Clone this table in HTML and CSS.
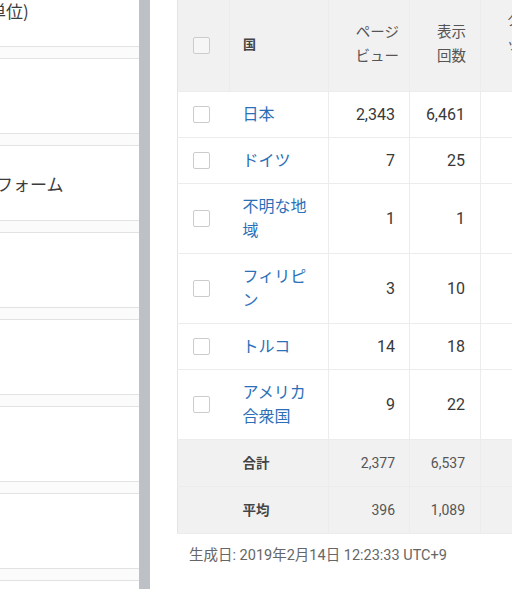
FILE: index.html
```html
<!DOCTYPE html>
<html lang="ja">
<head>
<meta charset="utf-8">
<link rel="stylesheet" href="styles.css">
</head>
<body>
<div class="page">
  <div class="left">
    <div class="cards">
      <div class="card"><span class="card-text t1">単位)</span></div>
      <div class="card"></div>
      <div class="card"><span class="card-text t2">フォーム</span></div>
      <div class="card"></div>
      <div class="card"></div>
      <div class="card"></div>
      <div class="card"></div>
      <div class="card"></div>
    </div>
  </div>
  <div class="scrollbar"></div>
  <div class="right">
    <table class="report">
      <thead>
        <tr>
          <th class="c-cb"><span class="cb"></span></th>
          <th class="c-name">国</th>
          <th class="c-pv">ページ<br>ビュー</th>
          <th class="c-imp">表示<br>回数</th>
          <th class="c-clk">クリ<br>ック<br>数</th>
        </tr>
      </thead>
      <tbody>
        <tr>
          <td class="c-cb"><span class="cb"></span></td>
          <td class="c-name"><a class="link">日本</a></td>
          <td class="c-pv">2,343</td>
          <td class="c-imp">6,461</td>
          <td class="c-clk">0</td>
        </tr>
        <tr>
          <td class="c-cb"><span class="cb"></span></td>
          <td class="c-name"><a class="link">ドイツ</a></td>
          <td class="c-pv">7</td>
          <td class="c-imp">25</td>
          <td class="c-clk">0</td>
        </tr>
        <tr>
          <td class="c-cb"><span class="cb"></span></td>
          <td class="c-name"><a class="link">不明な地域</a></td>
          <td class="c-pv">1</td>
          <td class="c-imp">1</td>
          <td class="c-clk">0</td>
        </tr>
        <tr>
          <td class="c-cb"><span class="cb"></span></td>
          <td class="c-name"><a class="link">フィリピン</a></td>
          <td class="c-pv">3</td>
          <td class="c-imp">10</td>
          <td class="c-clk">0</td>
        </tr>
        <tr>
          <td class="c-cb"><span class="cb"></span></td>
          <td class="c-name"><a class="link">トルコ</a></td>
          <td class="c-pv">14</td>
          <td class="c-imp">18</td>
          <td class="c-clk">0</td>
        </tr>
        <tr>
          <td class="c-cb"><span class="cb"></span></td>
          <td class="c-name"><a class="link">アメリカ合衆国</a></td>
          <td class="c-pv">9</td>
          <td class="c-imp">22</td>
          <td class="c-clk">0</td>
        </tr>
      </tbody>
      <tfoot>
        <tr>
          <td class="c-cb"></td>
          <td class="c-name label">合計</td>
          <td class="c-pv">2,377</td>
          <td class="c-imp">6,537</td>
          <td class="c-clk">0</td>
        </tr>
        <tr>
          <td class="c-cb"></td>
          <td class="c-name label">平均</td>
          <td class="c-pv">396</td>
          <td class="c-imp">1,089</td>
          <td class="c-clk">0</td>
        </tr>
      </tfoot>
    </table>
    <div class="generated">生成日: 2019年2月14日 12:23:33 UTC+9</div>
  </div>
</div>
</body>
</html>
```

FILE: styles.css
```css
html, body {
  margin: 0;
  padding: 0;
  background: #ffffff;
}

body {
  font-family: Roboto, "Noto Sans CJK JP", sans-serif;
  color: #333333;
}

.page {
  display: flex;
  width: 512px;
  height: 589px;
  overflow: hidden;
}

.left {
  width: 139px;
  flex: none;
  background: #fbfbfb;
  overflow: hidden;
}

.cards {
  display: flex;
  flex-direction: column;
  gap: 11px;
  margin-top: -29px;
}

.card {
  height: 74px;
  flex: none;
  background: #ffffff;
  border-top: 1px solid #e2e2e2;
  border-bottom: 1px solid #e2e2e2;
  display: flex;
  align-items: center;
  overflow: hidden;
}

.card-text {
  font-family: "Noto Sans CJK JP", sans-serif;
  font-size: 17px;
  color: #3c3c3c;
  white-space: nowrap;
}

.t1 { margin-left: -11px; margin-top: 3px; }
.t2 { margin-left: -4px; }

.scrollbar {
  width: 11px;
  flex: none;
  background: #bdc1c6;
}

.right {
  flex: 1;
  min-width: 0;
  padding-left: 27px;
  overflow: hidden;
  background: #ffffff;
}

.report {
  border-collapse: collapse;
  table-layout: fixed;
  width: 372px;
  border-left: 1px solid #e4e4e4;
}

.report th,
.report td {
  padding: 0;
  line-height: 24px;
  border-bottom: 1px solid #ececec;
  vertical-align: middle;
}

.report th + th,
.report td + td.c-pv,
.report td + td.c-imp,
.report td + td.c-clk {
  border-left: 1px solid #ececec;
}

.report thead tr {
  background: #f1f1f1;
}

.report th {
  height: 91px;
  font-weight: normal;
  font-size: 14.5px;
  color: #555555;
}

.report tbody td {
  padding-top: 11px;
  padding-bottom: 10px;
  font-size: 16px;
  color: #383838;
}

.report tfoot tr {
  background: #f1f1f1;
}

.report tfoot td {
  height: 47px;
  font-size: 14px;
  color: #555555;
}

.c-cb {
  width: 52px;
  padding-left: 15px !important;
  box-sizing: border-box;
}

.c-name {
  width: 99px;
  padding-left: 13px !important;
  padding-right: 10px !important;
  box-sizing: border-box;
  text-align: left;
}

.c-pv {
  width: 81px;
  padding-right: 14px !important;
  box-sizing: border-box;
  text-align: right;
}

.c-imp {
  width: 71px;
  padding-right: 15px !important;
  box-sizing: border-box;
  text-align: right;
}

.c-clk {
  width: 69px;
  padding-right: 14px !important;
  box-sizing: border-box;
  text-align: right;
}

th.c-pv { padding-right: 10px !important; }
th.c-imp { padding-right: 14px !important; }

th.c-name {
  font-size: 13px;
  font-weight: bold;
  color: #444444;
}

.report tfoot .label {
  font-size: 13.5px;
  font-weight: bold;
  color: #444444;
}

.cb {
  display: block;
  width: 15px;
  height: 15px;
  border: 1.5px solid #cccccc;
  border-radius: 2px;
  background: #ffffff;
}

.report th .cb {
  background: #f6f6f6;
}

.link {
  color: #2b6fb8;
  text-decoration: none;
}

.generated {
  margin-top: 12px;
  padding-left: 12px;
  font-size: 14.5px;
  line-height: 20px;
  color: #666666;
  white-space: nowrap;
}
```
